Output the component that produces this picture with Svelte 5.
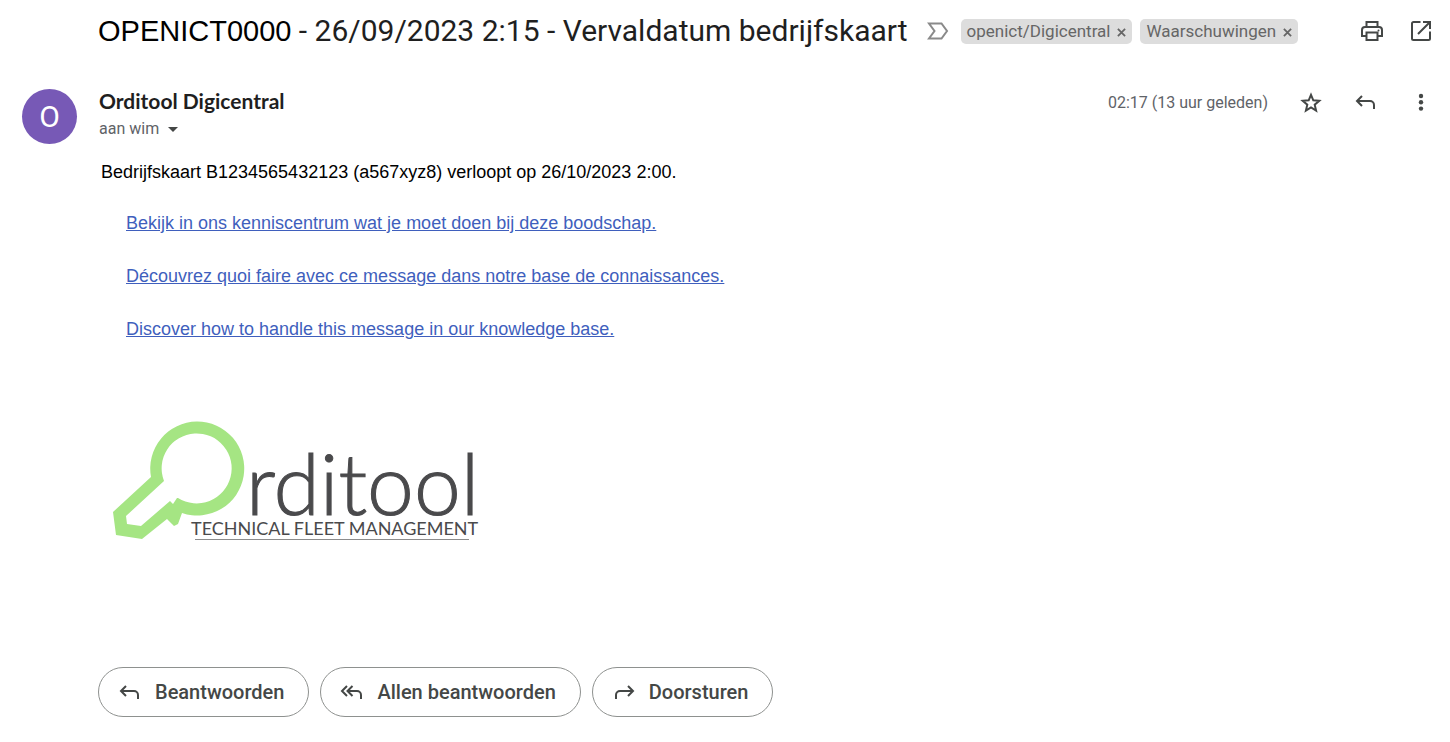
<script>
  let starred = $state(false);

  let labels = $state(["openict/Digicentral", "Waarschuwingen"]);

  const links = [
    "Bekijk in ons kenniscentrum wat je moet doen bij deze boodschap.",
    "Découvrez quoi faire avec ce message dans notre base de connaissances.",
    "Discover how to handle this message in our knowledge base."
  ];

  const actions = [
    { icon: "reply", text: "Beantwoorden" },
    { icon: "replyAll", text: "Allen beantwoorden" },
    { icon: "forward", text: "Doorsturen" }
  ];

  const paths = {
    reply: "M8 6 3 11l5 5M3.500 11H16a4 4 0 0 1 4 4v4",
    replyAll: "M7 6 2 11l5 5M12.500 6 7.500 11l5 5M8 11h9a4 4 0 0 1 4 4v4",
    forward: "M16 6l5 5-5 5M20.500 11H8a4 4 0 0 0-4 4v4"
  };

  const removeLabel = label => {
    labels = labels.filter(l => l !== label);
  };
</script>

<main>
  <header>
    <h1><span class="code">OPENICT0000</span> - 26/09/2023 2:15 - Vervaldatum bedrijfskaart</h1>

    <div class="labels">
      <svg class="marker" viewBox="0 0 22 18" aria-hidden="true">
        <path d="M2 1.500h12.500l5.500 7.500-5.500 7.500H2L7.500 9z" />
      </svg>
      {#each labels as label}
        <span class="label">
          {label}
          <button aria-label="Label {label} verwijderen" onclick={() => removeLabel(label)}>
            <svg viewBox="0 0 10 10"><path d="M1 1l8 8M9 1 1 9" /></svg>
          </button>
        </span>
      {/each}
    </div>

    <div class="tools">
      <button class="icon" aria-label="Alles afdrukken">
        <svg viewBox="0 0 24 24">
          <path d="M6.500 8V3h11v5M6.500 17H2v-6a3 3 0 0 1 3-3h14a3 3 0 0 1 3 3v6h-4.500M6.500 13.500h11V21h-11z" />
          <circle class="dot" cx="18.500" cy="11.500" r="1" />
        </svg>
      </button>
      <button class="icon" aria-label="In nieuw venster">
        <svg viewBox="0 0 24 24">
          <path d="M11.500 3H4.500A1.500 1.500 0 0 0 3 4.500v15A1.500 1.500 0 0 0 4.500 21h15a1.500 1.500 0 0 0 1.500-1.500V12.500M14 3h7v7M21 3 9 15" />
        </svg>
      </button>
    </div>
  </header>

  <section class="sender">
    <div class="avatar">O</div>
    <div class="who">
      <strong>Orditool Digicentral</strong>
      <button class="to">
        aan wim
        <svg viewBox="0 0 10 5"><path d="M0 0h10L5 5z" /></svg>
      </button>
    </div>
    <div class="meta">
      <time>02:17 (13 uur geleden)</time>
      <button class="icon" aria-label="Ster" aria-pressed={starred} onclick={() => (starred = !starred)}>
        <svg viewBox="0 0 24 24" class:starred>
          <path d="M12 4.800l2.300 5.500 6 .500-4.600 3.900 1.400 5.900-5.100-3.100-5.100 3.100 1.400-5.900-4.600-3.900 6-.500z" />
        </svg>
      </button>
      <button class="icon" aria-label="Beantwoorden">
        <svg viewBox="0 0 24 24"><path d={paths.reply} /></svg>
      </button>
      <button class="icon" aria-label="Meer">
        <svg viewBox="0 0 24 24">
          <circle class="dot" cx="12" cy="6" r="2.200" />
          <circle class="dot" cx="12" cy="12.300" r="2.200" />
          <circle class="dot" cx="12" cy="18.600" r="2.200" />
        </svg>
      </button>
    </div>
  </section>

  <article>
    <p>Bedrijfskaart B1234565432123 (a567xyz8) verloopt op 26/10/2023 2:00.</p>
    <ul>
      {#each links as link}
        <li><a href="#help">{link}</a></li>
      {/each}
    </ul>

    <svg class="logo" viewBox="0 0 400 160" role="img" aria-label="Orditool Technical Fleet Management">
      <!-- key: ring with a shaft that opens into it -->
      <path
        class="key"
        d="M61 76A47 47 0 1 1 92 112L88 123 84 125 77 118 52 138 26 134 23 111zM74 80 36 115l1 8 14 2 29-25 3 3 4-6 1 0A35 35 0 1 0 74 80z" />
      <text class="word" x="156" y="114">rditool</text>
      <text class="tagline" x="101" y="134">TECHNICAL FLEET MANAGEMENT</text>
      <path class="rule" d="M105 138.500h274" />
    </svg>
  </article>

  <footer>
    {#each actions as action}
      <button>
        <svg viewBox="0 0 24 24"><path d={paths[action.icon]} /></svg>
        {action.text}
      </button>
    {/each}
  </footer>
</main>

<style>
  :global(body) {
    margin: 0;
    background: #fff;
  }
  main {
    padding: 7px 17px 24px 22px;
    font-family: Roboto, "Liberation Sans", sans-serif;
    color: #5f6368;
  }
  button {
    padding: 0;
    border: 0;
    background: none;
    font: inherit;
    color: inherit;
    cursor: pointer;
  }
  svg {
    display: block;
    fill: none;
    stroke: #444746;
    stroke-width: 2;
  }
  header {
    display: flex;
    align-items: center;
    height: 48px;
    padding-left: 76px;
  }
  h1 {
    margin: 0;
    font-size: 30px;
    font-weight: 400;
    line-height: 40px;
    color: #1f1f1f;
    white-space: nowrap;
  }
  .code {
    font-family: "Liberation Sans", Arial, sans-serif;
    font-size: 29px;
    color: #000;
  }
  .labels {
    display: flex;
    align-items: center;
    gap: 8px;
    margin-left: 19px;
  }
  .marker {
    width: 22px;
    height: 18px;
    margin-right: 4px;
    stroke: #8a8a8a;
  }
  .label {
    display: flex;
    align-items: center;
    gap: 7px;
    height: 25px;
    padding: 0 6px;
    border-radius: 5px;
    background: #ddd;
    font-size: 17px;
    color: #666;
    white-space: nowrap;
  }
  .label svg {
    width: 9px;
    height: 9px;
    margin-top: 2px;
    stroke: #666;
  }
  .tools {
    display: flex;
    gap: 25px;
    margin-left: auto;
  }
  .icon svg {
    width: 24px;
    height: 24px;
  }
  .dot {
    fill: #444746;
    stroke: none;
  }
  .starred {
    fill: #f4b400;
    stroke: #f4b400;
  }
  .sender {
    display: flex;
    align-items: flex-start;
    padding-top: 34px;
  }
  .avatar {
    width: 55px;
    height: 55px;
    border-radius: 50%;
    background: #7759b6;
    font-size: 30px;
    line-height: 56px;
    text-align: center;
    color: #fff;
  }
  .who {
    display: flex;
    flex-direction: column;
    align-items: flex-start;
    margin-left: 22px;
  }
  .who strong {
    font-family: Lato, sans-serif;
    font-size: 21px;
    line-height: 24px;
    color: #1f1f1f;
  }
  .to {
    display: flex;
    align-items: center;
    gap: 9px;
    font-size: 16px;
    line-height: 32px;
  }
  .to svg {
    width: 10px;
    height: 5px;
    fill: #444746;
    stroke: none;
  }
  .meta {
    display: flex;
    align-items: center;
    gap: 31px;
    height: 26px;
    margin-left: auto;
    font-size: 16px;
  }
  article {
    padding-left: 79px;
    font-family: "Liberation Sans", Arial, sans-serif;
    font-size: 18px;
    line-height: 26px;
  }
  p {
    margin: 14px 0 0;
    color: #000;
  }
  ul {
    display: grid;
    gap: 27px;
    margin: 25px 0 0;
    padding: 0 0 0 25px;
    list-style: none;
  }
  a {
    color: #3f5fbd;
  }
  .logo {
    width: 400px;
    height: 160px;
    margin: 59px 0 0 -11px;
    stroke: none;
  }
  .key {
    fill: #a5e583;
    fill-rule: evenodd;
  }
  .word {
    font-family: Lato, sans-serif;
    font-size: 84px;
    font-weight: 300;
    fill: #4a4a4c;
    stroke: #4a4a4c;
    stroke-width: 1;
  }
  .tagline {
    font-family: Lato, sans-serif;
    font-size: 18px;
    fill: #4a4a4c;
  }
  .rule {
    stroke: #8c8c8c;
    stroke-width: 1;
  }
  footer {
    display: flex;
    gap: 11px;
    margin-top: 106px;
    padding-left: 76px;
  }
  footer button {
    display: flex;
    align-items: center;
    gap: 13px;
    height: 50px;
    padding: 0 24px 0 19px;
    border: 1px solid #8e918f;
    border-radius: 25px;
    font-size: 20px;
    font-weight: 500;
    color: #444746;
  }
  footer svg {
    width: 24px;
    height: 24px;
  }
</style>
